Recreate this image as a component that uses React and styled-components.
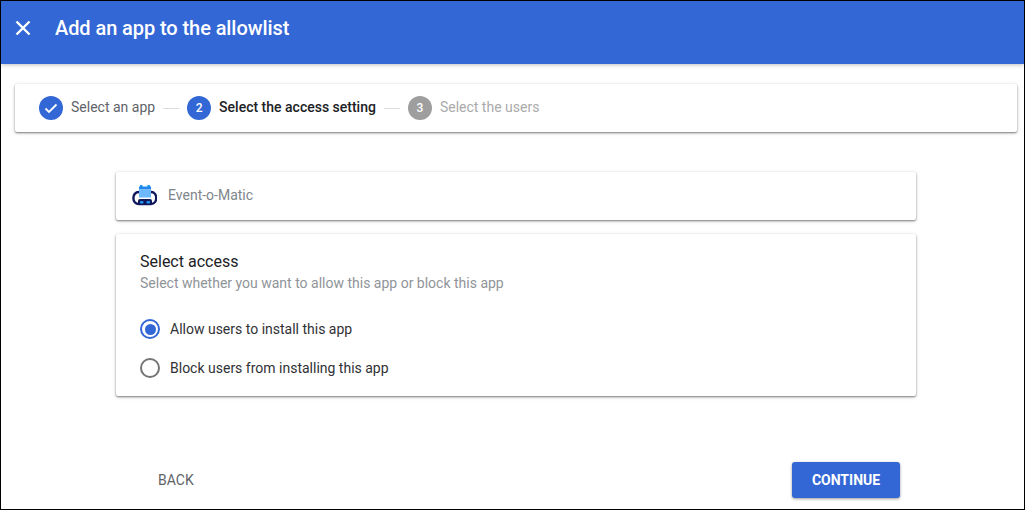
import React from 'react';
import styled, { createGlobalStyle } from 'styled-components';

const GlobalStyle = createGlobalStyle`
  html, body {
    margin: 0;
    padding: 0;
    background: #fff;
  }
  body {
    font-family: 'Roboto', sans-serif;
    overflow: hidden;
  }
`;

const BLUE = '#3367d6';

const Frame = styled.div`
  box-sizing: border-box;
  width: 1025px;
  height: 510px;
  border: 1px solid #000;
  display: flex;
  flex-direction: column;
  background: #fff;
`;

const Header = styled.header`
  height: 63px;
  flex: none;
  display: flex;
  align-items: center;
  background: ${BLUE};
  box-shadow: 0 1px 4px rgba(0, 0, 0, 0.25);
  padding: 0 0 9px 13px;
  box-sizing: border-box;
  color: #fff;
`;

const CloseButton = styled.button`
  width: 18px;
  height: 18px;
  padding: 0;
  border: 0;
  background: none;
  color: #fff;
  display: flex;
`;

const Title = styled.h1`
  margin: 0 0 0 23px;
  font-size: 20px;
  font-weight: 500;
  line-height: 28px;
  letter-spacing: -0.08px;
`;

const Content = styled.div`
  flex: 1;
  display: flex;
  flex-direction: column;
  padding: 20px 7px 11px 14px;
`;

const Card = styled.section`
  background: #fff;
  border-radius: 2px;
  box-shadow: 0 1px 2px rgba(0, 0, 0, 0.45), 0 1px 4px rgba(0, 0, 0, 0.15);
`;

const Stepper = styled(Card)`
  height: 48px;
  display: flex;
  align-items: center;
  padding-left: 24px;
`;

const Step = styled.div`
  display: flex;
  align-items: center;
  gap: 8px;
  font-size: 14px;
  color: ${(p) => (p.$state === 'active' ? '#202124' : p.$state === 'done' ? '#5f6368' : '#aaa')};
  font-weight: ${(p) => (p.$state === 'active' ? 500 : 400)};
`;

const StepLabel = styled.span`
  padding-bottom: 2px;
`;

const StepDot = styled.span`
  width: 24px;
  height: 24px;
  border-radius: 50%;
  background: ${(p) => (p.$state === 'todo' ? '#9e9e9e' : BLUE)};
  color: #fff;
  font-size: 12px;
  font-weight: 500;
  display: flex;
  align-items: center;
  justify-content: center;
`;

const StepLine = styled.span`
  width: 16px;
  height: 1px;
  background: #ddd;
  margin: 0 8px;
`;

const Column = styled.div`
  width: 800px;
  margin: 40px 0 0 101px;
  display: flex;
  flex-direction: column;
  gap: 14px;
`;

const AppCard = styled(Card)`
  height: 48px;
  display: flex;
  align-items: center;
  gap: 11px;
  padding-left: 15px;
  font-size: 14px;
  color: #80868b;
`;

const AppName = styled.span`
  padding-bottom: 2px;
`;

const AccessCard = styled(Card)`
  height: 162px;
  box-sizing: border-box;
  padding: 18px 24px 0;
`;

const CardTitle = styled.h2`
  margin: 0;
  font-size: 16px;
  font-weight: 400;
  line-height: 19px;
  color: #202124;
`;

const CardHint = styled.p`
  margin: 3px 0 0;
  font-size: 14px;
  line-height: 18px;
  color: #8f9499;
`;

const Options = styled.div`
  margin-top: 27px;
  display: flex;
  flex-direction: column;
  gap: 19px;
`;

const Option = styled.label`
  display: flex;
  align-items: center;
  gap: 10px;
  height: 20px;
  font-size: 14px;
  color: #303134;
`;

const Radio = styled.span`
  box-sizing: border-box;
  width: 20px;
  height: 20px;
  border-radius: 50%;
  border: 2px solid ${(p) => (p.$checked ? BLUE : '#757575')};
  display: flex;
  align-items: center;
  justify-content: center;
  &::after {
    content: '';
    display: ${(p) => (p.$checked ? 'block' : 'none')};
    width: 11px;
    height: 11px;
    border-radius: 50%;
    background: ${BLUE};
  }
`;

const Footer = styled.div`
  margin: auto 117px 0 121px;
  display: flex;
  align-items: center;
  justify-content: space-between;
`;

const BackButton = styled.button`
  padding: 0 22px;
  height: 36px;
  border: 0;
  background: none;
  font-family: inherit;
  font-size: 14px;
  font-weight: 400;
  color: #5f6368;
`;

const ContinueButton = styled.button`
  width: 108px;
  height: 36px;
  border: 0;
  border-radius: 3px;
  background: ${BLUE};
  color: #fff;
  font-family: inherit;
  font-size: 14px;
  font-weight: 700;
  box-shadow: 0 1px 3px rgba(0, 0, 0, 0.4);
`;

function AppLogo() {
  return (
    <svg width="26" height="24" viewBox="0 0 26 24">
      <path d="M8 8 C0.5 8 0.5 20 8 20 L20 20 C27 20 27 8 20 8" fill="none" stroke="#10185c" strokeWidth="2.4" />
      <rect x="9" y="1" width="2.5" height="2" fill="#2196f3" />
      <rect x="16.5" y="1" width="2.5" height="2" fill="#2196f3" />
      <rect x="8" y="2.5" width="12" height="3" fill="#1e88f0" />
      <rect x="8" y="5.5" width="12" height="8" fill="#6cb8fa" />
      <rect x="7" y="15" width="14" height="6" rx="2" fill="#10185c" />
      <rect x="9" y="17" width="3.5" height="2.5" rx="1" fill="#2196f3" />
      <rect x="15.5" y="17" width="3.5" height="2.5" rx="1" fill="#2196f3" />
    </svg>
  );
}

export default function App() {
  return (
    <Frame>
      <GlobalStyle />
      <Header>
        <CloseButton aria-label="Close">
          <svg width="18" height="18" viewBox="0 0 18 18">
            <path d="M2.5 2.5 L15.5 15.5 M15.5 2.5 L2.5 15.5" stroke="currentColor" strokeWidth="2.4" />
          </svg>
        </CloseButton>
        <Title>Add an app to the allowlist</Title>
      </Header>
      <Content>
        <Stepper>
          <Step $state="done">
            <StepDot $state="done">
              <svg width="16" height="16" viewBox="0 0 16 16">
                <path d="M2.5 8.5 L6 12 L13.5 4.5" fill="none" stroke="#fff" strokeWidth="1.8" />
              </svg>
            </StepDot>
            <StepLabel>Select an app</StepLabel>
          </Step>
          <StepLine />
          <Step $state="active">
            <StepDot $state="active">2</StepDot>
            <StepLabel>Select the access setting</StepLabel>
          </Step>
          <StepLine />
          <Step $state="todo">
            <StepDot $state="todo">3</StepDot>
            <StepLabel>Select the users</StepLabel>
          </Step>
        </Stepper>
        <Column>
          <AppCard>
            <AppLogo />
            <AppName>Event-o-Matic</AppName>
          </AppCard>
          <AccessCard>
            <CardTitle>Select access</CardTitle>
            <CardHint>Select whether you want to allow this app or block this app</CardHint>
            <Options>
              <Option>
                <Radio $checked />
                Allow users to install this app
              </Option>
              <Option>
                <Radio />
                Block users from installing this app
              </Option>
            </Options>
          </AccessCard>
        </Column>
        <Footer>
          <BackButton>BACK</BackButton>
          <ContinueButton>CONTINUE</ContinueButton>
        </Footer>
      </Content>
    </Frame>
  );
}
